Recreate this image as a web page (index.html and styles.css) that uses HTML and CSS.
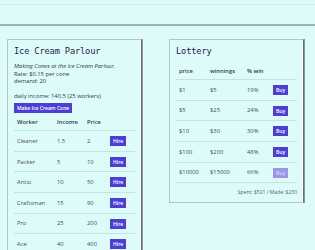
FILE: index.html
```html
<!DOCTYPE html>
<html lang="en">
<head>
    <meta charset="UTF-8">
    <meta name="viewport" content="width=device-width, initial-scale=1.0">
    <title>Ice Cream</title>
    <link rel="stylesheet" href="styles.css">
</head>
<body>
    <div class="topbar"></div>
    <div class="main">
        <div class="card parlour">
            <h2>Ice Cream Parlour</h2>
            <p><em>Making Cones at the Ice Cream Parlour.</em></p>
            <p>Rate: $0.15 per cone</p>
            <p>demand: 20</p>
            <p class="income">daily income: 140.5 (25 workers)</p>
            <button class="make">Make Ice Cream Cone</button>
            <table>
                <tr><th class="w1">Worker</th><th class="w2">Income</th><th class="w3">Price</th><th></th></tr>
                <tr><td>Cleaner</td><td>1.5</td><td>2</td><td><button>Hire</button></td></tr>
                <tr><td>Packer</td><td>5</td><td>10</td><td><button>Hire</button></td></tr>
                <tr><td>Artist</td><td>10</td><td>50</td><td><button>Hire</button></td></tr>
                <tr><td>Craftsman</td><td>15</td><td>90</td><td><button>Hire</button></td></tr>
                <tr><td>Pro</td><td>25</td><td>200</td><td><button>Hire</button></td></tr>
                <tr><td>Ace</td><td>40</td><td>400</td><td><button>Hire</button></td></tr>
            </table>
        </div>
        <div class="card lottery">
            <h2>Lottery</h2>
            <table>
                <tr><th class="l1">price</th><th class="l2">winnings</th><th class="l3">% win</th><th></th></tr>
                <tr><td>$1</td><td>$5</td><td>19%</td><td><button>Buy</button></td></tr>
                <tr><td>$5</td><td>$25</td><td>24%</td><td><button>Buy</button></td></tr>
                <tr><td>$10</td><td>$30</td><td>30%</td><td><button>Buy</button></td></tr>
                <tr><td>$100</td><td>$200</td><td>48%</td><td><button>Buy</button></td></tr>
                <tr><td>$10000</td><td>$15000</td><td>66%</td><td><button disabled>Buy</button></td></tr>
            </table>
            <p class="stats">Spent: $521 / Made: $230</p>
        </div>
    </div>
</body>
</html>
```

FILE: styles.css
```css
body {
    margin: 0;
    padding: 0;
    font-family: "Open Sans", sans-serif;
    font-size: 5.8px;
    line-height: 7.7px;
    color: #34384a;
    background-color: #dcfbf9;
}
.topbar {
    margin-top: 4px;
    height: 19px;
    border-top: 1px solid #e4eaea;
    border-bottom: 2px solid #9fb3b0;
}
.main {
    display: flex;
    align-items: flex-start;
    gap: 27px;
    padding: 13px 7px;
}
.card {
    width: 121px;
    padding: 6px;
    border: 1px solid #b3c6c3;
    border-right: 1px solid #66716f;
    box-shadow: inset -1px 0 0 #fff, 1px 0 0 #8a9896;
}
.lottery {
    padding-bottom: 5px;
}
h2 {
    margin: 0 0 6px;
    font-family: "DejaVu Sans Mono", monospace;
    font-size: 8.7px;
    letter-spacing: -0.15px;
    line-height: 11px;
    font-weight: normal;
    color: #1e1b4b;
}
p {
    margin: 0;
}
.income {
    margin-top: 7.3px;
}
button {
    border: none;
    background-color: #4b3fd6;
    color: #fff;
    font-family: "Open Sans", sans-serif;
    font-size: 5px;
    font-weight: 600;
    line-height: 10px;
    height: 10px;
    padding: 0 3px;
    vertical-align: middle;
    cursor: pointer;
}
button:disabled {
    background-color: #9c96e8;
    color: #d8d6f6;
}
.make {
    display: block;
    margin: 1.8px 0 1.2px;
}
table {
    width: 100%;
    table-layout: fixed;
    border-collapse: collapse;
}
th {
    text-align: left;
    font-weight: 600;
    line-height: 10px;
    padding: 3px 3px;
    border-bottom: 1px solid #c6e2df;
}
td {
    line-height: 10px;
    padding: 4.6px 3px;
    color: #4a4d5c;
    border-bottom: 1px solid #c6e2df;
    white-space: nowrap;
}
.w1 { width: 34px; }
.w2 { width: 24px; }
.w3 { width: 17px; }
.l1 { width: 25px; }
.l2 { width: 31px; }
.l3 { width: 20px; }
.stats {
    text-align: right;
    margin-top: 6px;
    color: #5a5e6e;
    font-size: 5px;
}
```
